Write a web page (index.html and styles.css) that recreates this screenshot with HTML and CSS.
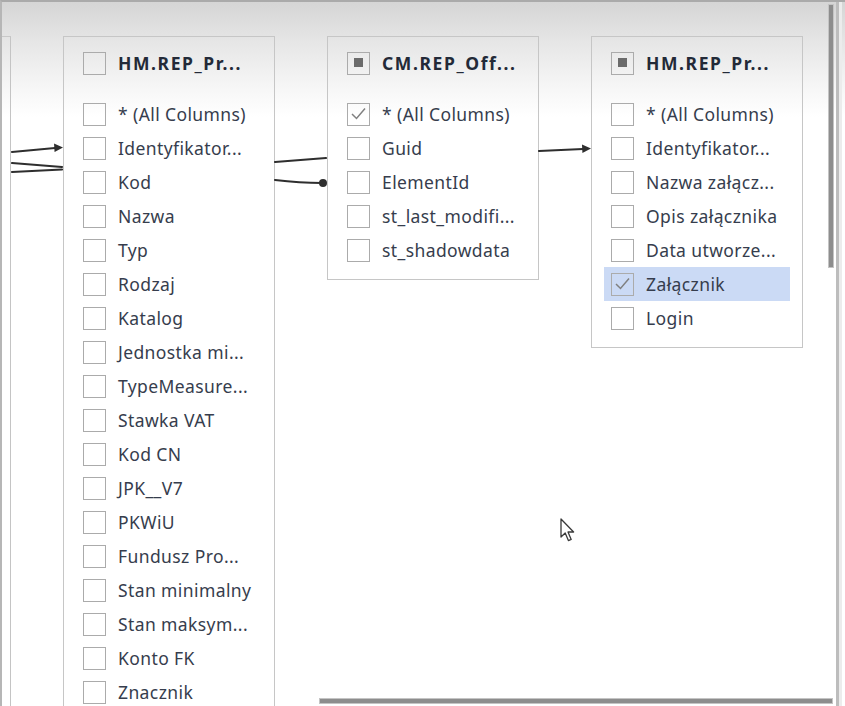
FILE: index.html
```html
<!DOCTYPE html>
<html>
<head>
<meta charset="utf-8">
<link rel="stylesheet" href="styles.css">
</head>
<body>
<div class="frame">
  <div class="canvas">
    <div class="partial"></div>

    <div class="table">
      <div class="head"><span class="cb"></span><span class="title">HM.REP_Pr...</span></div>
      <div class="row"><span class="cb"></span><span class="lbl">* (All Columns)</span></div>
      <div class="row"><span class="cb"></span><span class="lbl">Identyfikator...</span></div>
      <div class="row"><span class="cb"></span><span class="lbl">Kod</span></div>
      <div class="row"><span class="cb"></span><span class="lbl">Nazwa</span></div>
      <div class="row"><span class="cb"></span><span class="lbl">Typ</span></div>
      <div class="row"><span class="cb"></span><span class="lbl">Rodzaj</span></div>
      <div class="row"><span class="cb"></span><span class="lbl">Katalog</span></div>
      <div class="row"><span class="cb"></span><span class="lbl">Jednostka mi...</span></div>
      <div class="row"><span class="cb"></span><span class="lbl">TypeMeasure...</span></div>
      <div class="row"><span class="cb"></span><span class="lbl">Stawka VAT</span></div>
      <div class="row"><span class="cb"></span><span class="lbl">Kod CN</span></div>
      <div class="row"><span class="cb"></span><span class="lbl">JPK__V7</span></div>
      <div class="row"><span class="cb"></span><span class="lbl">PKWiU</span></div>
      <div class="row"><span class="cb"></span><span class="lbl">Fundusz Pro...</span></div>
      <div class="row"><span class="cb"></span><span class="lbl">Stan minimalny</span></div>
      <div class="row"><span class="cb"></span><span class="lbl">Stan maksym...</span></div>
      <div class="row"><span class="cb"></span><span class="lbl">Konto FK</span></div>
      <div class="row"><span class="cb"></span><span class="lbl">Znacznik</span></div>
    </div>

    <div class="table">
      <div class="head"><span class="cb mixed"></span><span class="title">CM.REP_Off...</span></div>
      <div class="row"><span class="cb"><svg class="tick" viewBox="0 0 23 23"><path d="M5 12 L9.5 16.5 L18 6.5"/></svg></span><span class="lbl">* (All Columns)</span></div>
      <div class="row"><span class="cb"></span><span class="lbl">Guid</span></div>
      <div class="row"><span class="cb"></span><span class="lbl">ElementId</span></div>
      <div class="row"><span class="cb"></span><span class="lbl">st_last_modifi...</span></div>
      <div class="row"><span class="cb"></span><span class="lbl">st_shadowdata</span></div>
    </div>

    <div class="table">
      <div class="head"><span class="cb mixed"></span><span class="title">HM.REP_Pr...</span></div>
      <div class="row"><span class="cb"></span><span class="lbl">* (All Columns)</span></div>
      <div class="row"><span class="cb"></span><span class="lbl">Identyfikator...</span></div>
      <div class="row"><span class="cb"></span><span class="lbl">Nazwa załącz...</span></div>
      <div class="row"><span class="cb"></span><span class="lbl">Opis załącznika</span></div>
      <div class="row"><span class="cb"></span><span class="lbl">Data utworze...</span></div>
      <div class="row sel"><span class="cb"><svg class="tick" viewBox="0 0 23 23"><path d="M5 12 L9.5 16.5 L18 6.5"/></svg></span><span class="lbl">Załącznik</span></div>
      <div class="row"><span class="cb"></span><span class="lbl">Login</span></div>
    </div>
  </div>

  <svg class="links" width="845" height="706" viewBox="0 0 845 706">
    <g stroke="#2e2e2e" stroke-width="2.2" fill="none" stroke-linecap="round">
      <path d="M12 152 L55 148"/>
      <path d="M12 163 L62 167"/>
      <path d="M12 172 L62 169.5"/>
      <path d="M275 162 L326 158"/>
      <path d="M275 180 Q300 183 322 183"/>
      <path d="M539 151 L583 149"/>
    </g>
    <g fill="#2e2e2e">
      <path d="M63 147.5 L54 143.5 L54.6 152 Z"/>
      <path d="M591 148.5 L582 144.5 L582.4 153 Z"/>
      <circle cx="323" cy="183" r="4"/>
    </g>
  </svg>

  <div class="vscroll"></div>
  <div class="hscroll"></div>

  <svg class="cursor" width="16" height="26" viewBox="0 0 16 26">
    <path d="M1 1 L1 19 L5.2 15 L8.4 22.6 L11.2 21.4 L8 14 L13.6 14 Z" fill="#fff" stroke="#3a3a3a" stroke-width="1.3" stroke-linejoin="round"/>
  </svg>
</div>
</body>
</html>
```
FILE: styles.css
```css
html, body {
  margin: 0;
  padding: 0;
  width: 845px;
  height: 706px;
  overflow: hidden;
  background: #fff;
}

.frame {
  position: relative;
  box-sizing: border-box;
  width: 845px;
  height: 706px;
  overflow: hidden;
  border-top: 2px solid #aaaaaa;
  border-left: 2px solid #b6b6b6;
  background: linear-gradient(#d5d5d5 0px, #e6e6e6 40px, #f6f6f6 85px, #ffffff 115px);
  font-family: "Noto Sans", "Open Sans", sans-serif;
}

.canvas {
  display: flex;
  align-items: flex-start;
  gap: 52px;
  padding-top: 34px;
}

.partial {
  flex-shrink: 0;
  box-sizing: border-box;
  width: 9px;
  height: 700px;
  border-top: 1px solid #c8c8c8;
  border-right: 1.5px solid #c4c4c4;
}

.table {
  flex-shrink: 0;
  box-sizing: border-box;
  width: 212px;
  border: 1px solid #c6c6c6;
  padding: 9px 0 12px;
}

.head {
  display: flex;
  align-items: center;
  height: 34px;
  padding-left: 19px;
  margin-bottom: 17px;
}

.row {
  display: flex;
  align-items: center;
  height: 34px;
  margin: 0 12px;
  padding-left: 7px;
}

.row.sel {
  background: #cbdaf5;
}

.cb {
  position: relative;
  flex-shrink: 0;
  box-sizing: border-box;
  width: 23px;
  height: 23px;
  border: 1.5px solid #ababab;
  background: transparent;
}

.cb.mixed::after {
  content: "";
  position: absolute;
  left: 5.5px;
  top: 5.5px;
  width: 9px;
  height: 9px;
  background: #6b6b6b;
}

.tick {
  position: absolute;
  left: -1.5px;
  top: -1.5px;
  width: 23px;
  height: 23px;
  fill: none;
  stroke: #808080;
  stroke-width: 1.5;
}

.title {
  margin-left: 12px;
  font-size: 17.5px;
  font-weight: 700;
  letter-spacing: 1.6px;
  color: #232a38;
  white-space: nowrap;
}

.lbl {
  margin-left: 12px;
  font-size: 17.5px;
  letter-spacing: 0.4px;
  color: #363d4d;
  white-space: nowrap;
}

.links {
  position: absolute;
  left: -2px;
  top: -2px;
  pointer-events: none;
}

.vscroll {
  position: absolute;
  left: 827px;
  top: 3px;
  width: 4px;
  height: 262px;
  background: #8d8d8d;
  box-shadow: 0 0 0 1px #c4c4c4;
}

.frame::after {
  content: "";
  position: absolute;
  left: 834px;
  top: 0;
  width: 3px;
  height: 706px;
  background: #bdbdbd;
  box-shadow: 3px 0 0 #ececec;
}

.hscroll {
  position: absolute;
  left: 318px;
  top: 697px;
  width: 512px;
  height: 4px;
  background: #8d8d8d;
  box-shadow: 0 0 0 1px #c4c4c4;
}

.cursor {
  position: absolute;
  left: 558px;
  top: 516px;
}
```
